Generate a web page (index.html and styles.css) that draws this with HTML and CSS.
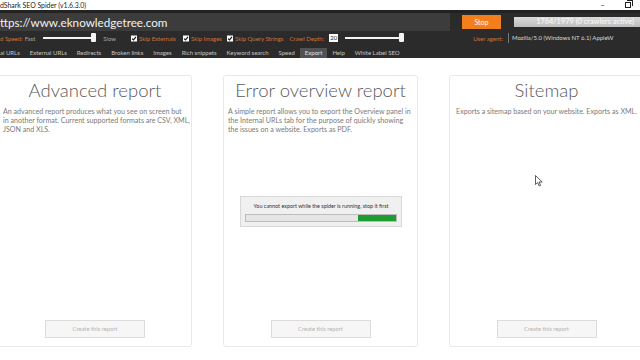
FILE: index.html
```html
<!DOCTYPE html>
<html>
<head>
<meta charset="utf-8">
<link rel="stylesheet" href="styles.css">
</head>
<body>
<div class="titlebar">
  <span class="app-title">dShark SEO Spider (v1.6.3.0)</span>
  <span class="winctl">–</span>
  <span class="winctl restore"></span>
</div>
<div class="toolbar">
  <div class="row1">
    <div class="url">ttps://www.eknowledgetree.com</div>
    <div class="stop">Stop</div>
    <div class="progress">1764/1979 (0 crawlers active)</div>
  </div>
  <div class="row2">
    <span class="lbl">d Speed:</span>
    <span class="muted fast">Fast</span>
    <span class="slider s1"><span class="thumb"></span></span>
    <span class="muted slow">Slow</span>
    <span class="chk c1"><svg viewBox="0 0 7 7" width="6" height="7"><rect width="7" height="7" fill="#fff"/><path d="M1.3 3.6 L2.9 5.2 L5.8 1.6" stroke="#111" stroke-width="1.3" fill="none"/></svg></span>
    <span class="lbl">Skip Externals</span>
    <span class="chk c2"><svg viewBox="0 0 7 7" width="6" height="7"><rect width="7" height="7" fill="#fff"/><path d="M1.3 3.6 L2.9 5.2 L5.8 1.6" stroke="#111" stroke-width="1.3" fill="none"/></svg></span>
    <span class="lbl">Skip Images</span>
    <span class="chk c3"><svg viewBox="0 0 7 7" width="6" height="7"><rect width="7" height="7" fill="#fff"/><path d="M1.3 3.6 L2.9 5.2 L5.8 1.6" stroke="#111" stroke-width="1.3" fill="none"/></svg></span>
    <span class="lbl">Skip Query Strings</span>
    <span class="lbl depth">Crawl Depth:</span>
    <span class="num">20</span>
    <span class="slider s2"><span class="thumb"></span></span>
    <span class="lbl ua">User agent:</span>
    <span class="ua-field">Mozilla/5.0 (Windows NT 6.1) AppleW</span>
  </div>
  <nav class="tabs">
    <span class="tab first">al URLs</span>
    <span class="tab">External URLs</span>
    <span class="tab">Redirects</span>
    <span class="tab">Broken links</span>
    <span class="tab">Images</span>
    <span class="tab">Rich snippets</span>
    <span class="tab">Keyword search</span>
    <span class="tab">Speed</span>
    <span class="tab active">Export</span>
    <span class="tab">Help</span>
    <span class="tab">White Label SEO</span>
  </nav>
</div>
<main class="content">
  <section class="card">
    <h2>Advanced report</h2>
    <p>An advanced report produces what you see on screen but<br>in another format. Current supported formats are CSV, XML,<br>JSON and XLS.</p>
    <div class="btn">Create this report</div>
  </section>
  <section class="card">
    <h2>Error overview report</h2>
    <p>A simple report allows you to export the Overview panel in<br>the Internal URLs tab for the purpose of quickly showing<br>the issues on a website. Exports as PDF.</p>
    <div class="btn">Create this report</div>
    <div class="dialog">
      <div class="dialog-text">You cannot export while the spider is running, stop it first</div>
      <div class="bar"><span class="fill"></span></div>
    </div>
  </section>
  <section class="card">
    <h2>Sitemap</h2>
    <p class="center">Exports a sitemap based on your website. Exports as XML.</p>
    <div class="btn">Create this report</div>
  </section>
</main>
<svg class="cursor" width="8" height="12" viewBox="0 0 8 12"><path d="M0.5 0.5 L0.5 9.5 L2.7 7.5 L4.2 11 L5.6 10.4 L4.1 7 L7.2 7 Z" fill="#fff" stroke="#333" stroke-width="0.8"/></svg>
</body>
</html>
```
FILE: styles.css
```css
html, body {
  margin: 0;
  padding: 0;
}
body {
  width: 640px;
  height: 360px;
  overflow: hidden;
  background: #fff;
  font-family: Lato, "Noto Sans", sans-serif;
  position: relative;
}
.titlebar {
  height: 10px;
  display: flex;
  align-items: center;
  background: #fff;
  color: #222;
  font-size: 6.9px;
}
.app-title { flex: 1; }
.winctl {
  width: 25px;
  text-align: center;
  font-size: 8px;
  line-height: 10px;
}
.winctl.restore {
  display: flex;
  justify-content: center;
  align-items: center;
}
.winctl.restore::before {
  content: "";
  width: 4px;
  height: 4px;
  border: 1px solid #222;
  box-shadow: 1px -1px 0 0 #fff, 2px -2px 0 0 #222;
}
.toolbar {
  background: #2b2b2b;
  border-top: 3px solid #222;
}
.row1 {
  display: flex;
  align-items: center;
  height: 18px;
}
.url {
  width: 450px;
  height: 18px;
  background: #3c3c3c;
  color: #f2f2f2;
  font-size: 11.7px;
  line-height: 18px;
  white-space: nowrap;
  overflow: hidden;
}
.stop {
  margin-left: 12px;
  width: 39px;
  height: 14px;
  background: #f27f1b;
  color: #fff;
  font-size: 7px;
  line-height: 14px;
  text-align: center;
}
.progress {
  margin-left: 13px;
  flex: 1;
  height: 10px;
  background: linear-gradient(#dadada, #bdbdbd);
  color: #fafafa;
  font-size: 7.4px;
  line-height: 10px;
  text-align: right;
  padding-right: 6px;
  white-space: nowrap;
  overflow: hidden;
}
.row2 {
  display: flex;
  align-items: center;
  height: 14px;
  font-size: 6px;
  white-space: nowrap;
}
.lbl { color: #d0743a; }
.muted { color: #a8a8a8; }
.fast { margin-left: 2px; }
.slider {
  position: relative;
  height: 2px;
  background: #f4f4f4;
}
.slider .thumb {
  position: absolute;
  right: 0;
  top: -4px;
  width: 5px;
  height: 9px;
  background: #f4f4f4;
  border-radius: 1px;
}
.s1 { margin-left: 8px; width: 53px; }
.slow { margin-left: 7px; }
.chk { display: flex; margin-right: 2px; }
.c1 { margin-left: 15px; }
.c2 { margin-left: 7px; }
.c3 { margin-left: 5px; }
.depth { margin-left: 6px; }
.num {
  margin-left: 5px;
  width: 9px;
  height: 8px;
  background: #fff;
  color: #222;
  font-size: 6px;
  line-height: 8px;
  text-align: center;
}
.s2 { margin-left: 7px; width: 59px; }
.ua { margin-left: auto; margin-right: 5px; }
.ua-field {
  width: 128px;
  height: 10px;
  border-left: 1px solid #777;
  color: #d8d8d8;
  padding-left: 3px;
  line-height: 10px;
  overflow: hidden;
}
.tabs {
  display: flex;
  height: 13px;
  font-size: 6px;
  color: #c6c6c6;
  white-space: nowrap;
}
.tab {
  margin-top: 3px;
  padding: 0 5px;
  line-height: 10px;
}
.tab.first { margin-left: -5px; }
.tab.active { background: #525252; color: #e0e0e0; }
.content {
  display: flex;
  gap: 31px;
  padding-top: 17px;
  margin-left: -3px;
}
.card {
  position: relative;
  flex: none;
  box-sizing: border-box;
  width: 195px;
  height: 272px;
  border: 1px solid #e9e9e9;
  border-radius: 3px;
  background: #fff;
  display: flex;
  flex-direction: column;
  padding: 0 4px;
}
.card:first-child { padding-left: 5px; }
.card h2 {
  margin: 4px 0 0;
  font-weight: 300;
  font-size: 18.5px;
  line-height: 20px;
  color: #595959;
  text-align: center;
}
.card p {
  margin: 7px 0 0;
  font-size: 7.1px;
  line-height: 9.2px;
  color: #7a7a7a;
  white-space: nowrap;
}
.card p.center { text-align: center; }
.btn {
  margin-top: auto;
  margin-bottom: 8px;
  align-self: center;
  box-sizing: border-box;
  width: 100px;
  height: 18px;
  background: #f6f6f6;
  border: 1px solid #dcdcdc;
  color: #b3b3b3;
  font-size: 5.8px;
  line-height: 16px;
  text-align: center;
}
.dialog {
  position: absolute;
  top: 120px;
  left: 16px;
  width: 162px;
  height: 31px;
  box-sizing: border-box;
  background: #f0f0f0;
  border: 1px solid #d8d8d8;
  padding: 5px 4px 0 4px;
  display: flex;
  flex-direction: column;
  gap: 3px;
}
.dialog-text {
  font-size: 5.4px;
  line-height: 9px;
  color: #333;
  text-align: center;
  white-space: nowrap;
}
.bar {
  height: 8px;
  box-sizing: border-box;
  border: 1px solid #bcbcbc;
  background: #e6e6e6;
  display: flex;
  justify-content: flex-end;
}
.fill {
  width: 38px;
  background: #1f9c31;
}
.cursor {
  position: absolute;
  left: 535px;
  top: 175px;
}
```
